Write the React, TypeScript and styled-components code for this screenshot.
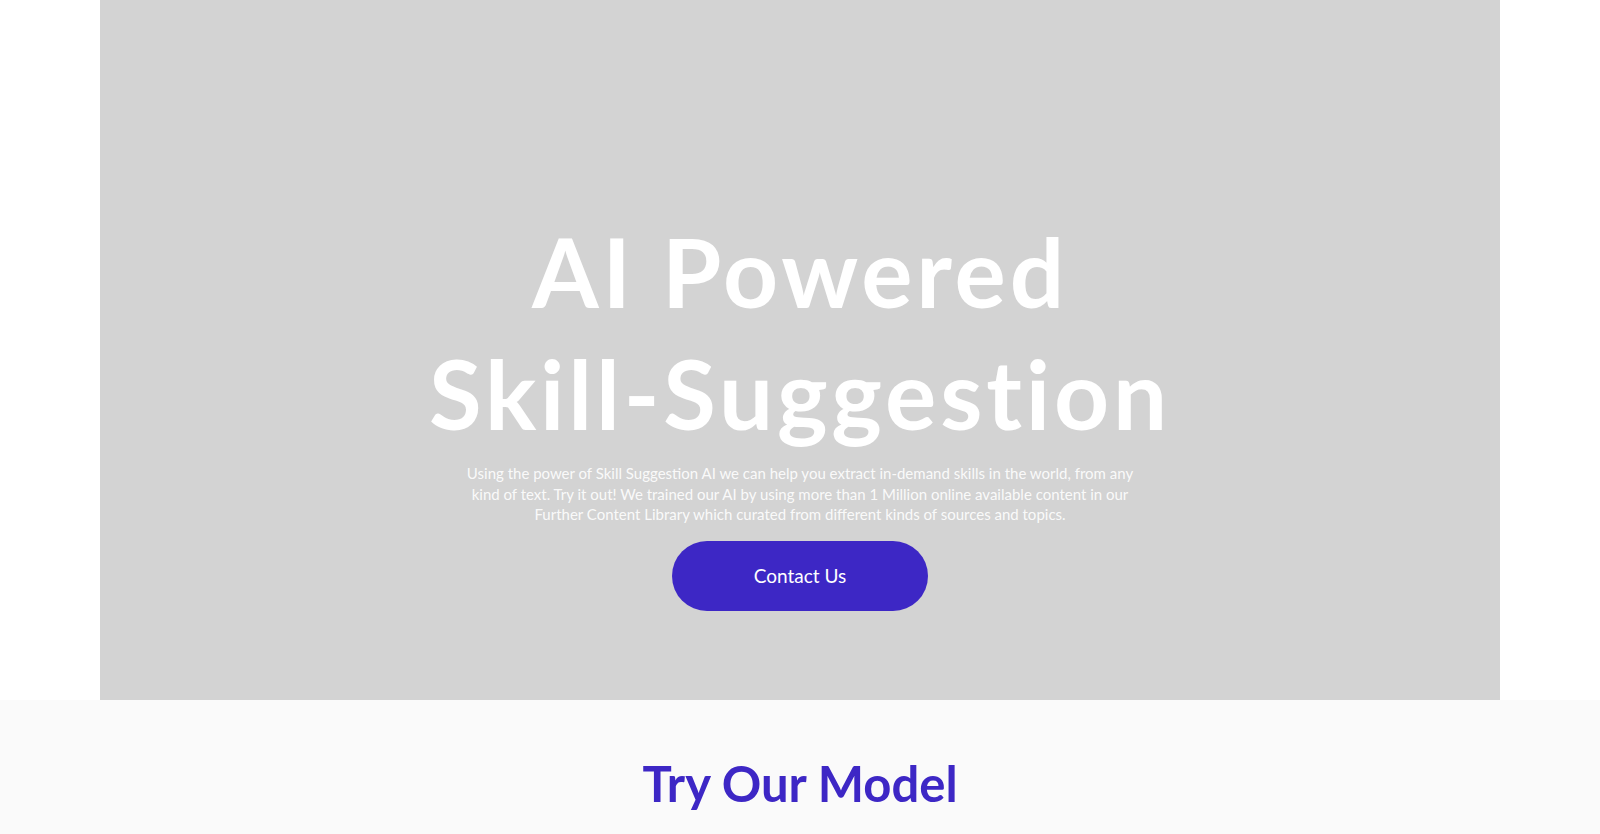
import React from "react";
import styled, { createGlobalStyle } from "styled-components";

const Global = createGlobalStyle`
  html, body { margin: 0; padding: 0; background: #ffffff; }
  body { font-family: "Lato", "Noto Sans", sans-serif; }
  * { box-sizing: border-box; }
`;

const Page = styled.div`
  display: flex;
  flex-direction: column;
  width: 100%;
  min-height: 834px;
`;

const HeroWrap = styled.div`
  display: flex;
  justify-content: center;
  background: #ffffff;
`;

const Hero = styled.section`
  width: 1400px;
  height: 700px;
  background: #d3d3d3;
  display: flex;
  flex-direction: column;
  align-items: center;
  padding-top: 210px;
`;

const Title = styled.h1`
  margin: 0;
  color: #ffffff;
  font-family: "Lato", "Noto Sans", sans-serif;
  font-weight: 700;
  font-size: 96px;
  line-height: 122px;
  letter-spacing: 0.04em;
  text-align: center;
`;

const Lead = styled.p`
  margin: 9px 0 0;
  width: 672px;
  color: rgba(255, 255, 255, 0.9);
  font-family: "Lato", "Noto Sans", sans-serif;
  font-size: 15px;
  line-height: 20.5px;
  text-align: center;
`;

const ContactButton = styled.button`
  margin-top: 16px;
  width: 256px;
  height: 70px;
  border: none;
  border-radius: 35px;
  background: #3d27c5;
  color: #ffffff;
  font-family: "Lato", "Noto Sans", sans-serif;
  font-size: 19px;
  cursor: pointer;
`;

const ModelSection = styled.section`
  flex: 1;
  background: #fafafa;
  display: flex;
  justify-content: center;
  padding-top: 48px;
`;

const SectionTitle = styled.h2`
  margin: 0;
  color: #3d27c5;
  font-family: "Lato", "Noto Sans", sans-serif;
  font-weight: 700;
  font-size: 49px;
  line-height: 70px;
`;

export default function App() {
  return (
    <>
      <Global />
      <Page>
        <HeroWrap>
          <Hero>
            <Title>
              AI Powered
              <br />
              Skill-Suggestion
            </Title>
            <Lead>
              Using the power of Skill Suggestion AI we can help you extract in-demand skills in the world, from any
              kind of text. Try it out! We trained our AI by using more than 1 Million online available content in our
              Further Content Library which curated from different kinds of sources and topics.
            </Lead>
            <ContactButton>Contact Us</ContactButton>
          </Hero>
        </HeroWrap>
        <ModelSection>
          <SectionTitle>Try Our Model</SectionTitle>
        </ModelSection>
      </Page>
    </>
  );
}
